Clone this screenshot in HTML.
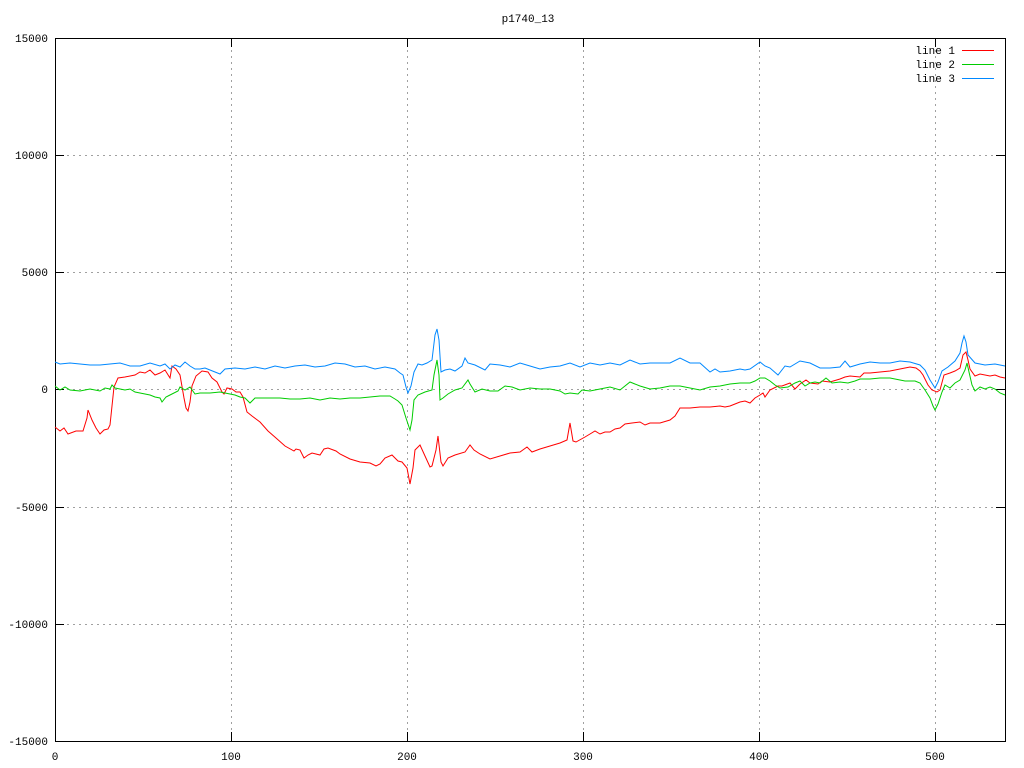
<!DOCTYPE html><html><head><style>body{margin:0;background:#fff}svg{display:block}text{font-family:"Liberation Mono","DejaVu Sans Mono",monospace;font-size:11px;fill:#000}</style></head><body>
<svg width="1024" height="768" xmlns="http://www.w3.org/2000/svg">
<g stroke="#a0a0a0" stroke-dasharray="2,4" stroke-width="1">
<line x1="55" y1="155.5" x2="1005" y2="155.5"/><line x1="55" y1="272.5" x2="1005" y2="272.5"/><line x1="55" y1="389.5" x2="1005" y2="389.5"/><line x1="55" y1="507.5" x2="1005" y2="507.5"/><line x1="55" y1="624.5" x2="1005" y2="624.5"/>
<line x1="231.5" y1="38" x2="231.5" y2="741"/><line x1="407.5" y1="38" x2="407.5" y2="741"/><line x1="583.5" y1="38" x2="583.5" y2="741"/><line x1="759.5" y1="38" x2="759.5" y2="741"/><line x1="935.5" y1="38" x2="935.5" y2="741"/>
</g>
<g stroke="#000" stroke-width="1">
<rect x="55.5" y="38.5" width="950" height="703" fill="none"/>
<path d="M55 38.5h9M55 155.5h9M55 272.5h9M55 389.5h9M55 507.5h9M55 624.5h9M55 741.5h9M1005 38.5h-9M1005 155.5h-9M1005 272.5h-9M1005 389.5h-9M1005 507.5h-9M1005 624.5h-9M1005 741.5h-9M55.5 741v-9M231.5 741v-9M407.5 741v-9M583.5 741v-9M759.5 741v-9M935.5 741v-9M231.5 38v9M407.5 38v9M583.5 38v9M759.5 38v9M935.5 38v9"/>
</g>
<g text-anchor="end"><text x="48" y="42">15000</text><text x="48" y="159">10000</text><text x="48" y="276">5000</text><text x="48" y="393">0</text><text x="48" y="511">-5000</text><text x="48" y="628">-10000</text><text x="48" y="745">-15000</text></g>
<g text-anchor="middle"><text x="55" y="760">0</text><text x="231" y="760">100</text><text x="407" y="760">200</text><text x="583" y="760">300</text><text x="759" y="760">400</text><text x="935" y="760">500</text><text x="528" y="22">p1740_13</text></g>
<g text-anchor="end"><text x="955" y="54">line 1</text><text x="955" y="68">line 2</text><text x="955" y="82">line 3</text></g>
<line x1="962" y1="50.5" x2="994" y2="50.5" stroke="#f00"/><line x1="962" y1="64.5" x2="994" y2="64.5" stroke="#0c0"/><line x1="962" y1="78.5" x2="994" y2="78.5" stroke="#08f"/>
<g fill="none" stroke-width="1">
<polyline stroke="#f00" points="55,427 60,431 64,428 68,434 76,431 83,431 87,418 88,410 92,420 96,428 100,434 104,430 108,429 110,425 114,387 118,378 125,377 135,375 140,372 145,373 150,370 155,375 160,373 165,370 170,378 172,366 176,369 180,375 184,398 186,408 188,411 190,402 192,386 196,376 202,371 208,372 212,378 217,382 220,388 222,392 224,394 227,388 232,389 236,392 240,392 243,397 247,412 252,416 256,419 260,422 268,431 276,438 285,446 294,451 296,449 300,450 304,458 308,455 312,453 320,455 324,449 328,448 336,451 340,454 350,459 360,462 370,463 376,466 380,464 385,458 392,455 398,461 402,462 407,468 410,484 413,468 415,450 420,445 425,456 430,467 432,466 436,450 438,436 441,462 443,466 448,458 455,455 465,452 470,445 474,450 480,454 490,459 500,456 510,453 520,452 527,447 532,452 540,449 550,446 560,443 567,440 570,423 573,441 576,442 585,437 590,434 595,431 600,434 605,432 610,432 615,429 620,428 625,424 632,423 640,422 645,425 650,423 660,423 670,420 675,416 680,408 690,408 700,407 710,407 720,406 725,407 730,406 735,404 740,402 745,401 750,403 755,398 760,395 763,393 765,397 770,390 778,386 782,386 790,383 795,389 800,384 806,380 810,383 818,384 822,381 830,382 840,379 845,377 850,376 860,377 864,373 870,373 880,372 890,371 900,369 910,367 916,368 920,371 923,375 928,385 932,390 937,392 940,390 944,375 950,373 955,371 960,368 963,355 966,352 968,360 970,369 975,376 980,374 990,376 995,375 1000,377 1005,378"/>
<polyline stroke="#0c0" points="55,386 60,390 65,387 70,390 80,391 90,389 100,391 105,388 110,389 112,385 115,388 120,389 125,390 130,389 135,392 140,393 150,395 155,397 160,398 162,402 166,397 170,395 178,391 180,387 185,390 190,387 195,394 200,393 210,393 220,392 230,394 235,395 240,397 245,398 250,403 255,398 260,398 270,398 280,398 290,399 300,399 310,398 320,400 330,398 340,399 350,398 360,398 370,397 380,396 390,396 395,399 398,401 402,405 406,418 410,430 412,420 414,400 418,395 425,392 432,390 434,375 437,360 439,375 440,400 443,398 448,394 455,390 462,388 468,380 470,384 475,392 482,389 490,391 498,391 505,386 512,387 520,390 530,388 540,389 550,389 560,391 565,394 570,393 578,394 582,390 590,391 600,389 610,387 620,390 630,382 640,386 650,389 660,388 670,386 680,386 690,388 700,390 710,387 720,386 730,384 740,383 750,383 755,381 760,378 765,378 770,381 775,385 780,388 788,387 795,383 800,381 805,386 810,383 815,382 820,383 826,378 832,383 840,382 848,383 855,381 860,379 870,379 880,378 890,378 900,380 905,381 915,381 920,383 925,390 930,398 933,406 935,410 938,404 942,392 945,385 950,388 955,383 960,380 965,370 967,363 969,372 972,385 975,391 980,387 985,389 990,387 995,389 1000,393 1005,395"/>
<polyline stroke="#08f" points="55,362 60,364 70,363 80,364 90,365 100,365 110,364 120,363 130,366 140,366 150,363 160,366 165,364 170,369 175,365 180,367 185,362 190,366 195,369 200,369 205,368 210,370 215,372 220,374 225,369 235,368 245,369 255,367 265,369 275,366 285,368 295,366 305,365 315,367 325,366 335,363 345,364 355,367 365,366 375,369 385,367 395,369 400,373 403,375 406,387 408,393 411,386 414,372 418,364 422,365 427,363 432,360 435,335 437,329 439,340 441,372 445,370 450,369 455,371 462,366 465,358 468,363 475,365 485,370 490,364 500,365 510,367 520,363 530,366 540,369 550,367 560,366 570,363 580,367 590,363 600,365 610,363 620,365 630,360 640,364 650,363 660,363 670,363 680,358 690,363 700,363 710,372 715,369 720,372 730,371 740,369 745,370 750,369 760,362 765,366 770,368 778,375 785,366 790,367 800,361 810,363 820,368 830,368 840,367 845,361 850,367 860,364 870,362 880,363 890,363 900,361 910,362 920,365 925,370 930,380 935,388 938,382 942,371 948,367 955,361 960,353 962,343 964,336 966,342 968,355 975,363 985,365 995,364 1005,366"/>
</g>
</svg></body></html>
